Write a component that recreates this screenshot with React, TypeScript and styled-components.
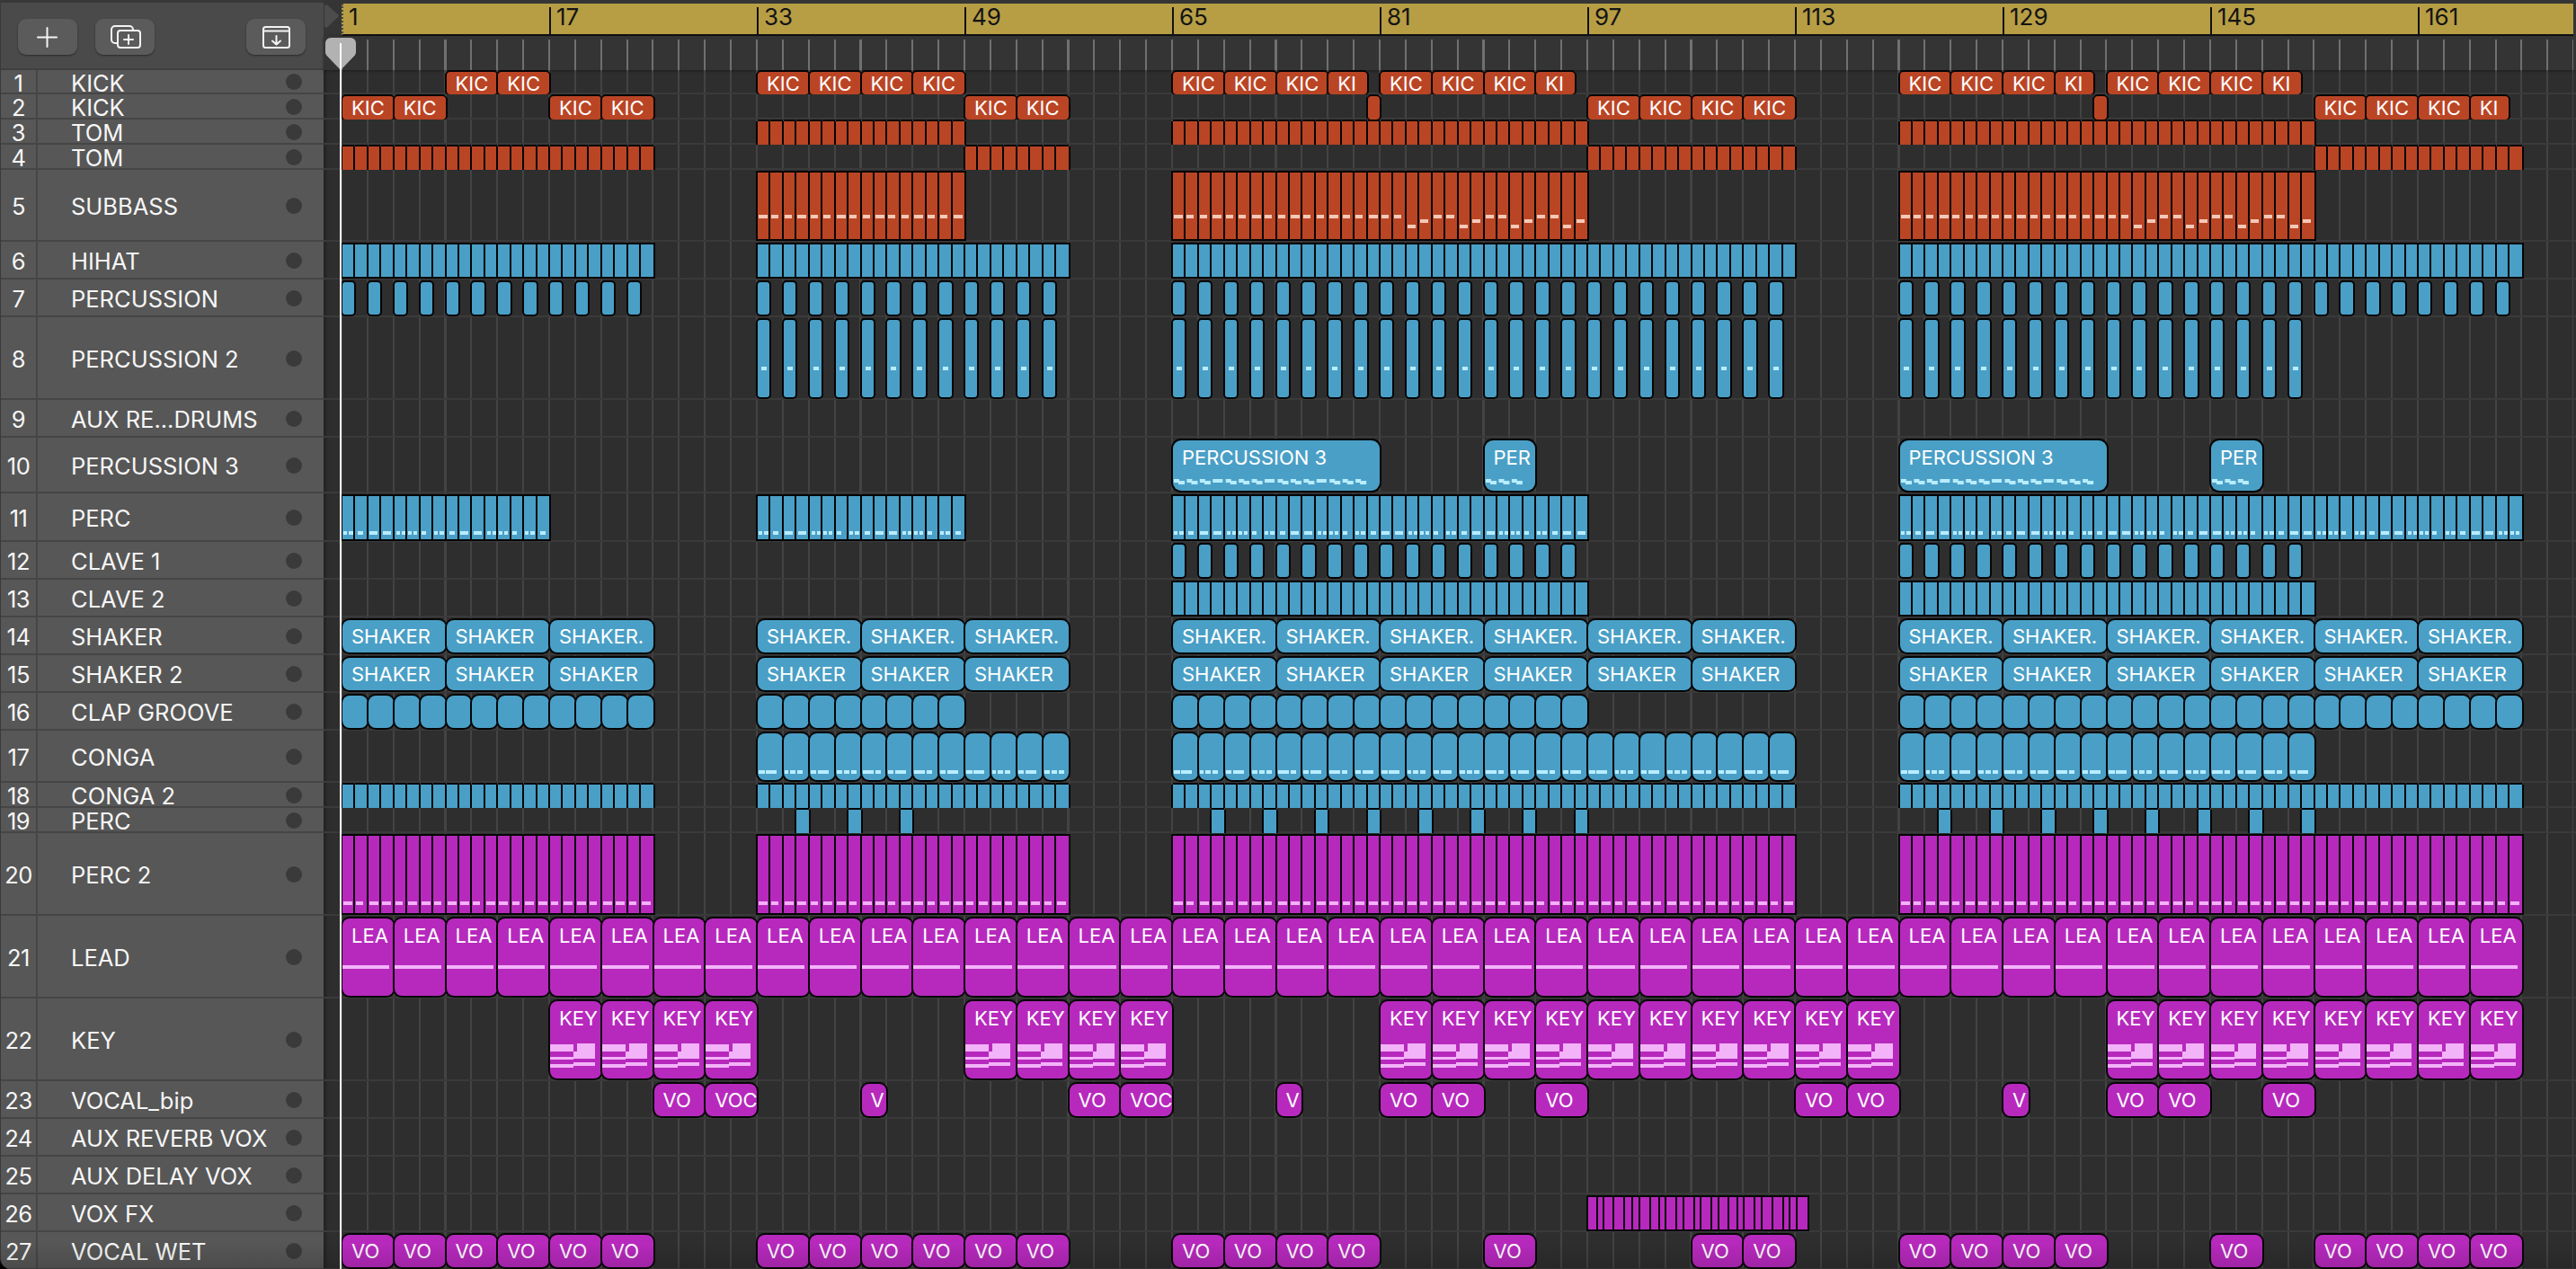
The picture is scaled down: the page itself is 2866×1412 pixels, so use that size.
// react
import { memo } from 'react';
// styled-components
import styled, { createGlobalStyle } from 'styled-components';

const BAR = 14.4375;
const FONT = `Inter, "Liberation Sans", sans-serif`;

const TONES = {
    red: { fill: '#ba4525', note: '#f5c9b8' },
    blue: { fill: '#4a9fc6', note: '#b8edff' },
    purple: { fill: '#b729bd', note: '#f3b3f9' },
};

type TTone = keyof typeof TONES;
type TRect = [number, number, number, number];
type TClip = {
    s: number;
    e: number;
    label?: string;
    notes?: TRect[];
    slices?: number[];
};
type TTrack = {
    name: string;
    h: number;
    tone?: TTone;
    flat?: boolean;
    radius?: number;
    raised?: boolean;
    clips?: TClip[];
};

// one clip per step between two bars
function every(from: number, to: number, step: number, label?: string, len = step, notes?: (i: number) => TRect[]): TClip[] {
    const out: TClip[] = [];
    let i = 0;
    for (let s = from; s < to; s += step) {
        out.push({ s, e: s + len, label, notes: notes ? notes(i) : undefined });
        i += 1;
    }
    return out;
}

const bars = (from: number, to: number, notes?: (i: number) => TRect[]) => every(from, to, 1, undefined, 1, notes);

const kicks = (s: number, short: boolean): TClip[] => [
    { s, e: s + 4, label: 'KIC' },
    { s: s + 4, e: s + 8, label: 'KIC' },
    { s: s + 8, e: s + 12, label: 'KIC' },
    { s: s + 12, e: short ? s + 15 : s + 16, label: short ? 'KI' : 'KIC' },
];

const subNote = (i: number): TRect[] => {
    if (i < 18) {
        return [[1, 47, i % 3 === 0 ? 10 : 8, 4]];
    }
    const level = [58, 52, 47, 47][(i - 18) % 4];
    return [[1, level, 9, 4]];
};
const flatSub = (i: number): TRect[] => [[1, 47, i % 3 === 0 ? 10 : 8, 4]];

const percDash = (): TRect[] => [[4, 52, 6, 4]];
const perc2Dash = (i: number): TRect[] => [[1, 73, i % 3 === 1 ? 8 : 10, 4]];

const PERC_PATTERN: TRect[][] = [
    [[1, 39, 4, 4], [7, 39, 5, 4]],
    [[3, 39, 6, 4]],
    [[1, 39, 9, 4]],
    [[2, 39, 9, 4]],
    [[2, 39, 4, 4], [8, 39, 4, 4]],
    [[1, 39, 4, 4], [7, 39, 4, 4]],
    [[1, 39, 5, 4]],
    [],
];
const percNote = (i: number): TRect[] => PERC_PATTERN[i % 7];

const CONGA_PATTERN: TRect[][] = [
    [[1, 41, 7, 4], [9, 41, 12, 4]],
    [[1, 41, 4, 4], [7, 41, 6, 4], [15, 41, 6, 4]],
    [[1, 41, 6, 4], [9, 41, 12, 4]],
    [[1, 41, 6, 4], [9, 41, 6, 4], [17, 41, 6, 4]],
    [[1, 41, 12, 4], [15, 41, 6, 4]],
    [[1, 41, 6, 4], [9, 41, 12, 4]],
    [[1, 41, 12, 4], [15, 41, 6, 4]],
    [[1, 41, 6, 4], [9, 41, 12, 4]],
];
const congaNote = (i: number): TRect[] => CONGA_PATTERN[i % 8];

// staircase of short notes along the clip
function stairs(count: number): TRect[] {
    const out: TRect[] = [];
    for (let i = 0; i < count; i += 1) {
        const x = i * BAR;
        if (i % 4 === 3) {
            out.push([x + 1, 43, 11, 4]);
        } else {
            out.push([x + 1, 43, 6, 4], [x + 6, 45, 7, 4]);
        }
    }
    return out;
}

const LEAD_NOTES: TRect[] = [[0, 52, 52, 4]];
const KEY_NOTES: TRect[] = [
    [0, 48, 26, 8],
    [0, 62, 26, 3],
    [0, 70, 26, 4],
    [26, 56, 24, 8],
    [30, 47, 20, 9],
    [26, 68, 24, 4],
];

const keyClips = (from: number, to: number) => every(from, to, 4, 'KEY', 4, () => KEY_NOTES);
const VOX_SLICES = [7, 4, 8, 8, 5, 5, 8, 7, 4, 8, 5, 8, 4, 8, 5, 7, 7, 4, 8, 5, 8, 8, 4, 5, 9];

const TRACKS: TTrack[] = [
    { name: 'KICK', h: 27, tone: 'red', flat: true, radius: 4, clips: [...every(9, 17, 4, 'KIC'), ...every(33, 49, 4, 'KIC'), ...kicks(65, true), ...kicks(81, true), ...kicks(121, true), ...kicks(137, true)] },
    { name: 'KICK', h: 28, tone: 'red', flat: true, radius: 4, clips: [...every(1, 9, 4, 'KIC'), ...every(17, 25, 4, 'KIC'), ...every(49, 57, 4, 'KIC'), { s: 80, e: 81 }, ...every(97, 113, 4, 'KIC'), { s: 136, e: 137 }, ...kicks(153, true)] },
    { name: 'TOM', h: 28, tone: 'red', flat: true, clips: [...bars(33, 49), ...bars(65, 97), ...bars(121, 153)] },
    { name: 'TOM', h: 28, tone: 'red', flat: true, clips: [...bars(1, 25), ...bars(49, 57), ...bars(97, 113), ...bars(153, 169)] },
    { name: 'SUBBASS', h: 80, tone: 'red', clips: [...bars(33, 49, flatSub), ...bars(65, 97, subNote), ...bars(121, 153, subNote)] },
    { name: 'HIHAT', h: 42, tone: 'blue', clips: [...bars(1, 25), ...bars(33, 57), ...bars(65, 113), ...bars(121, 169)] },
    { name: 'PERCUSSION', h: 42, tone: 'blue', radius: 3, clips: [...every(1, 25, 2, undefined, 1), ...every(33, 57, 2, undefined, 1), ...every(65, 113, 2, undefined, 1), ...every(121, 169, 2, undefined, 1)] },
    { name: 'PERCUSSION 2', h: 92, tone: 'blue', radius: 3, clips: [...every(33, 57, 2, undefined, 1, percDash), ...every(65, 113, 2, undefined, 1, percDash), ...every(121, 153, 2, undefined, 1, percDash)] },
    { name: 'AUX RE...DRUMS', h: 42 },
    {
        name: 'PERCUSSION 3',
        h: 62,
        tone: 'blue',
        radius: 9,
        raised: true,
        clips: [
            { s: 65, e: 81, label: 'PERCUSSION 3', notes: stairs(15) },
            { s: 89, e: 93, label: 'PER', notes: stairs(3) },
            { s: 121, e: 137, label: 'PERCUSSION 3', notes: stairs(15) },
            { s: 145, e: 149, label: 'PER', notes: stairs(3) },
        ],
    },
    { name: 'PERC', h: 54, tone: 'blue', clips: [...bars(1, 17, percNote), ...bars(33, 49, percNote), ...bars(65, 97, percNote), ...bars(121, 169, percNote)] },
    { name: 'CLAVE 1', h: 42, tone: 'blue', radius: 3, clips: [...every(65, 97, 2, undefined, 1), ...every(121, 153, 2, undefined, 1)] },
    { name: 'CLAVE 2', h: 42, tone: 'blue', clips: [...bars(65, 97), ...bars(121, 153)] },
    {
        name: 'SHAKER',
        h: 42,
        tone: 'blue',
        radius: 8,
        clips: [
            { s: 1, e: 9, label: 'SHAKER' },
            { s: 9, e: 17, label: 'SHAKER' },
            { s: 17, e: 25, label: 'SHAKER.' },
            ...every(33, 57, 8, 'SHAKER.'),
            ...every(65, 113, 8, 'SHAKER.'),
            ...every(121, 169, 8, 'SHAKER.'),
        ],
    },
    { name: 'SHAKER 2', h: 42, tone: 'blue', radius: 8, clips: [...every(1, 25, 8, 'SHAKER'), ...every(33, 57, 8, 'SHAKER'), ...every(65, 113, 8, 'SHAKER'), ...every(121, 169, 8, 'SHAKER')] },
    { name: 'CLAP GROOVE', h: 42, tone: 'blue', radius: 8, clips: [...every(1, 25, 2), ...every(33, 49, 2), ...every(65, 97, 2), ...every(121, 169, 2)] },
    { name: 'CONGA', h: 58, tone: 'blue', radius: 8, clips: [...every(33, 57, 2, undefined, 2, congaNote), ...every(65, 113, 2, undefined, 2, congaNote), ...every(121, 153, 2, undefined, 2, congaNote)] },
    { name: 'CONGA 2', h: 28, tone: 'blue', flat: true, clips: [...bars(1, 25), ...bars(33, 57), ...bars(65, 113), ...bars(121, 169)] },
    { name: 'PERC', h: 28, tone: 'blue', flat: true, clips: [...every(36, 48, 4, undefined, 1), ...every(68, 100, 4, undefined, 1), ...every(124, 156, 4, undefined, 1)] },
    { name: 'PERC 2', h: 92, tone: 'purple', clips: [...bars(1, 25, perc2Dash), ...bars(33, 57, perc2Dash), ...bars(65, 113, perc2Dash), ...bars(121, 169, perc2Dash)] },
    { name: 'LEAD', h: 92, tone: 'purple', radius: 8, raised: true, clips: every(1, 169, 4, 'LEA', 4, () => LEAD_NOTES) },
    { name: 'KEY', h: 92, tone: 'purple', radius: 8, raised: true, clips: [...keyClips(17, 33), ...keyClips(49, 65), ...keyClips(81, 121), ...keyClips(137, 169)] },
    {
        name: 'VOCAL_bip',
        h: 42,
        tone: 'purple',
        radius: 8,
        clips: [
            { s: 25, e: 29, label: 'VO' },
            { s: 29, e: 33, label: 'VOC' },
            { s: 41, e: 43, label: 'V' },
            { s: 57, e: 61, label: 'VO' },
            { s: 61, e: 65, label: 'VOC' },
            { s: 73, e: 75, label: 'V' },
            { s: 81, e: 85, label: 'VO' },
            { s: 85, e: 89, label: 'VO' },
            { s: 93, e: 97, label: 'VO' },
            { s: 113, e: 117, label: 'VO' },
            { s: 117, e: 121, label: 'VO' },
            { s: 129, e: 131, label: 'V' },
            { s: 137, e: 141, label: 'VO' },
            { s: 141, e: 145, label: 'VO' },
            { s: 149, e: 153, label: 'VO' },
        ],
    },
    { name: 'AUX REVERB VOX', h: 42 },
    { name: 'AUX DELAY VOX', h: 42 },
    { name: 'VOX FX', h: 42, tone: 'purple', clips: [{ s: 97, e: 114, slices: VOX_SLICES }] },
    {
        name: 'VOCAL WET',
        h: 42,
        tone: 'purple',
        radius: 8,
        clips: [
            ...every(1, 25, 4, 'VO'),
            ...every(33, 57, 4, 'VO'),
            ...every(65, 81, 4, 'VO'),
            { s: 89, e: 93, label: 'VO' },
            ...every(105, 113, 4, 'VO'),
            ...every(121, 137, 4, 'VO'),
            { s: 145, e: 149, label: 'VO' },
            ...every(153, 169, 4, 'VO'),
        ],
    },
];

const RULER_MARKS = [1, 17, 33, 49, 65, 81, 97, 113, 129, 145, 161];

const GlobalStyle = createGlobalStyle`
    html, body {
        margin: 0;
        padding: 0;
        background: #000;
    }
    * {
        box-sizing: border-box;
    }
`;

const StyledRoot = styled.div`
    position: relative;
    display: flex;
    width: 2866px;
    height: 1412px;
    overflow: hidden;
    background: #000;
    font-family: ${FONT};
`;

const StyledPanel = styled.aside`
    display: flex;
    flex-direction: column;
    flex: 0 0 360px;
    border-bottom-left-radius: 12px;
    overflow: hidden;
    background: #575757;
    border-left: 1px solid #3a3a3a;
`;

const StyledPanelHeader = styled.div`
    display: flex;
    align-items: center;
    flex: 0 0 78px;
    padding: 2px 20px 0 19px;
    gap: 20px;
    background: #4a4a4a;
    border-top: 3px solid #383838;
    border-bottom: 2px solid #3f3f3f;
`;

const StyledToolButton = styled.button<{ $push?: boolean }>`
    display: flex;
    align-items: center;
    justify-content: center;
    width: 66px;
    height: 40px;
    margin-left: ${(p) => (p.$push ? 'auto' : '0')};
    padding: 0;
    border: 0;
    border-radius: 9px;
    background: #5b5b5b;
    box-shadow: 0 1px 2px rgba(0, 0, 0, 0.45);
    svg {
        display: block;
        fill: none;
        stroke: #f4f4f4;
        stroke-width: 2;
        stroke-linecap: round;
        stroke-linejoin: round;
    }
`;

const StyledTrackRow = styled.div<{ $h: number }>`
    display: flex;
    align-items: center;
    flex: 0 0 ${(p) => p.$h}px;
    min-height: 0;
    padding-top: 4px;
    border-bottom: 2px solid #454545;
    color: #f6f6f6;
    font-size: 25.5px;
    line-height: 1;
`;

const StyledTrackNumber = styled.div`
    display: flex;
    align-items: center;
    justify-content: center;
    align-self: stretch;
    flex: 0 0 41px;
    margin-top: -4px;
    padding-top: 4px;
    border-right: 2px solid #464646;
    letter-spacing: -0.5px;
`;

const StyledTrackName = styled.div`
    flex: 1;
    padding-left: 37px;
    white-space: nowrap;
`;

const StyledRecDot = styled.span`
    flex: 0 0 18px;
    height: 18px;
    margin-top: -3px;
    margin-right: 24px;
    border-radius: 50%;
    background: #3a3a3a;
`;

const StyledArrange = styled.main`
    position: relative;
    display: flex;
    flex-direction: column;
    flex: 1;
    min-width: 0;
    background: #2e2e2e;
    box-shadow: inset 4px 0 4px -2px rgba(0, 0, 0, 0.35);
`;

const StyledRulerBar = styled.div`
    display: flex;
    flex: 0 0 40px;
    padding-top: 4px;
    background: #353535;
`;

const StyledLocator = styled.div`
    flex: 0 0 20px;
    svg {
        display: block;
    }
`;

const StyledRuler = styled.div`
    display: flex;
    flex: 0 0 2483px;
    overflow: hidden;
    background: #b79e45;
    border-left: 2px dotted #4b4b4b;
    border-bottom: 2px solid #111;
`;

const StyledRulerMark = styled.div`
    flex: 0 0 231px;
    height: 30px;
    margin-top: 4px;
    padding-left: 6px;
    border-left: 2px solid #111;
    color: #141414;
    font-size: 26px;
    line-height: 22px;
`;

const StyledFirstMark = styled(StyledRulerMark)`
    flex-basis: 229px;
    border-left: 0;
`;

const StyledTickBand = styled.div`
    display: flex;
    flex: 0 0 38px;
    padding: 4px 0 0 20px;
    background: #343434;
    box-shadow: 0 1px 3px rgba(0, 0, 0, 0.4);
`;

const StyledTicks = styled.div`
    flex: 0 0 2483px;
    background-image: repeating-linear-gradient(to right, #707070 0 2px, transparent 2px ${BAR * 2}px);
    background-position-x: -1px;
`;

const StyledLane = styled.div<{ $h: number }>`
    display: flex;
    flex: 0 0 ${(p) => p.$h}px;
    min-height: 0;
    padding-left: 20px;
    border-bottom: 2px solid #3a3a3a;
`;

const StyledLaneGrid = styled.div<{ $flat?: boolean }>`
    display: grid;
    flex: 0 0 2483px;
    grid-template-columns: repeat(172, ${BAR}px);
    grid-template-rows: minmax(0, 1fr);
    min-height: 0;
    padding-top: ${(p) => (p.$flat ? 2 : 3)}px;
    background-image: repeating-linear-gradient(to right, #434343 0 2px, transparent 2px ${BAR * 2}px);
    background-position-x: -1px;
`;

const StyledClip = styled.div.attrs<{ $s: number; $e: number }>((p) => ({
    style: { gridColumn: `${p.$s} / ${p.$e}` },
}))<{ $s: number; $e: number; $tone: TTone; $r: number; $flat?: boolean; $raised?: boolean }>`
    position: relative;
    grid-row: 1;
    display: flex;
    align-items: ${(p) => (p.$raised ? 'flex-start' : 'center')};
    min-width: 0;
    min-height: 0;
    margin: 0 0 ${(p) => (p.$flat ? '-2px' : '1px')} 1px;
    padding: ${(p) => (p.$raised ? '6px' : '0')} 0 0 10px;
    overflow: hidden;
    background: ${(p) => TONES[p.$tone].fill};
    border-radius: ${(p) => p.$r}px;
    box-shadow: ${(p) => (p.$flat ? '-2px 0 0 #050505, 2px 0 0 #050505, 0 -2px 0 #050505' : '0 0 0 2px #050505')};
    color: #fff;
    font-size: 22px;
    line-height: 26px;
    white-space: nowrap;
`;

const StyledNotes = styled.svg`
    position: absolute;
    left: 0;
    top: 0;
    width: 100%;
    height: 100%;
    pointer-events: none;
`;

const StyledSlices = styled.div`
    display: flex;
    flex: 1;
    align-self: stretch;
    margin-left: -10px;
`;

const StyledSlice = styled.span<{ $w: number }>`
    flex: ${(p) => p.$w} 0 0;
    border-right: 2px solid #050505;
    &:last-child {
        border-right: 0;
    }
`;

const StyledPlayhead = styled.div`
    position: absolute;
    left: 0;
    top: 42px;
    bottom: 0;
    width: 38px;
    pointer-events: none;
    &::after {
        content: '';
        position: absolute;
        left: 18px;
        top: 6px;
        bottom: 0;
        width: 2px;
        background: #fff;
    }
    svg {
        position: absolute;
        left: 2px;
        top: 0;
    }
`;

const StyledBottomShade = styled.div`
    position: absolute;
    left: 0;
    right: 0;
    bottom: 0;
    height: 30px;
    background: linear-gradient(to bottom, rgba(0, 0, 0, 0), rgba(0, 0, 0, 0.14));
    pointer-events: none;
`;

function Clip(props: { clip: TClip; track: TTrack }) {
    const { clip, track } = props;
    const tone = track.tone || 'blue';

    return (
        <StyledClip
            $s={clip.s}
            $e={clip.e}
            $tone={tone}
            $r={track.radius || 0}
            $flat={track.flat}
            $raised={track.raised}>
            {clip.label}
            {clip.notes && clip.notes.length > 0 && (
                <StyledNotes>
                    {clip.notes.map((n, i) => (
                        <rect key={i} x={n[0]} y={n[1]} width={n[2]} height={n[3]} fill={TONES[tone].note} />
                    ))}
                </StyledNotes>
            )}
            {clip.slices && (
                <StyledSlices>
                    {clip.slices.map((w, i) => (
                        <StyledSlice key={i} $w={w} />
                    ))}
                </StyledSlices>
            )}
        </StyledClip>
    );
}

function App() {
    return (
        <StyledRoot>
            <GlobalStyle />
            <StyledPanel>
                <StyledPanelHeader>
                    <StyledToolButton>
                        <svg width="66" height="40" viewBox="0 0 66 40">
                            <path d="M22 20.5h21M32.5 10v21" />
                        </svg>
                    </StyledToolButton>
                    <StyledToolButton>
                        <svg width="66" height="40" viewBox="0 0 66 40">
                            <path d="M25 27h-3a4 4 0 0 1-4-4V12a4 4 0 0 1 4-4h16a4 4 0 0 1 4 4v1" />
                            <rect x="25" y="13" width="25" height="19" rx="3" />
                            <path d="M32 23h10M37 18v10" />
                        </svg>
                    </StyledToolButton>
                    <StyledToolButton $push>
                        <svg width="66" height="40" viewBox="0 0 66 40">
                            <rect x="19" y="9" width="29" height="23" rx="2.5" />
                            <path d="M19 13.5h29M33.5 19v9M29 24.5l4.5 4 4.5-4" />
                        </svg>
                    </StyledToolButton>
                </StyledPanelHeader>
                {TRACKS.map((track, i) => (
                    <StyledTrackRow key={i} $h={track.h}>
                        <StyledTrackNumber>{i + 1}</StyledTrackNumber>
                        <StyledTrackName>{track.name}</StyledTrackName>
                        <StyledRecDot />
                    </StyledTrackRow>
                ))}
            </StyledPanel>
            <StyledArrange>
                <StyledRulerBar>
                    <StyledLocator>
                        <svg width="18" height="28" viewBox="0 0 18 28">
                            <path d="M1 3a2 2 0 0 1 3-1.5L16 12a2 2 0 0 1 0 3L4 26.5A2 2 0 0 1 1 25Z" fill="#4c4c4c" />
                        </svg>
                    </StyledLocator>
                    <StyledRuler>
                        {RULER_MARKS.map((mark) => (mark === 1 ? (
                            <StyledFirstMark key={mark}>{mark}</StyledFirstMark>
                        ) : (
                            <StyledRulerMark key={mark}>{mark}</StyledRulerMark>
                        )))}
                    </StyledRuler>
                </StyledRulerBar>
                <StyledTickBand>
                    <StyledTicks />
                </StyledTickBand>
                {TRACKS.map((track, i) => (
                    <StyledLane key={i} $h={track.h}>
                        <StyledLaneGrid $flat={track.flat}>
                            {(track.clips || []).map((clip, j) => (
                                <Clip key={j} clip={clip} track={track} />
                            ))}
                        </StyledLaneGrid>
                    </StyledLane>
                ))}
                <StyledPlayhead>
                    <svg width="34" height="36" viewBox="0 0 34 36">
                        <path d="M6 0h22a6 6 0 0 1 6 6v10a6 6 0 0 1-1.4 3.8L17 36 1.4 19.8A6 6 0 0 1 0 16V6a6 6 0 0 1 6-6Z" fill="#b2b2b2" />
                    </svg>
                </StyledPlayhead>
            </StyledArrange>
            <StyledBottomShade />
        </StyledRoot>
    );
}

export default memo(App);
